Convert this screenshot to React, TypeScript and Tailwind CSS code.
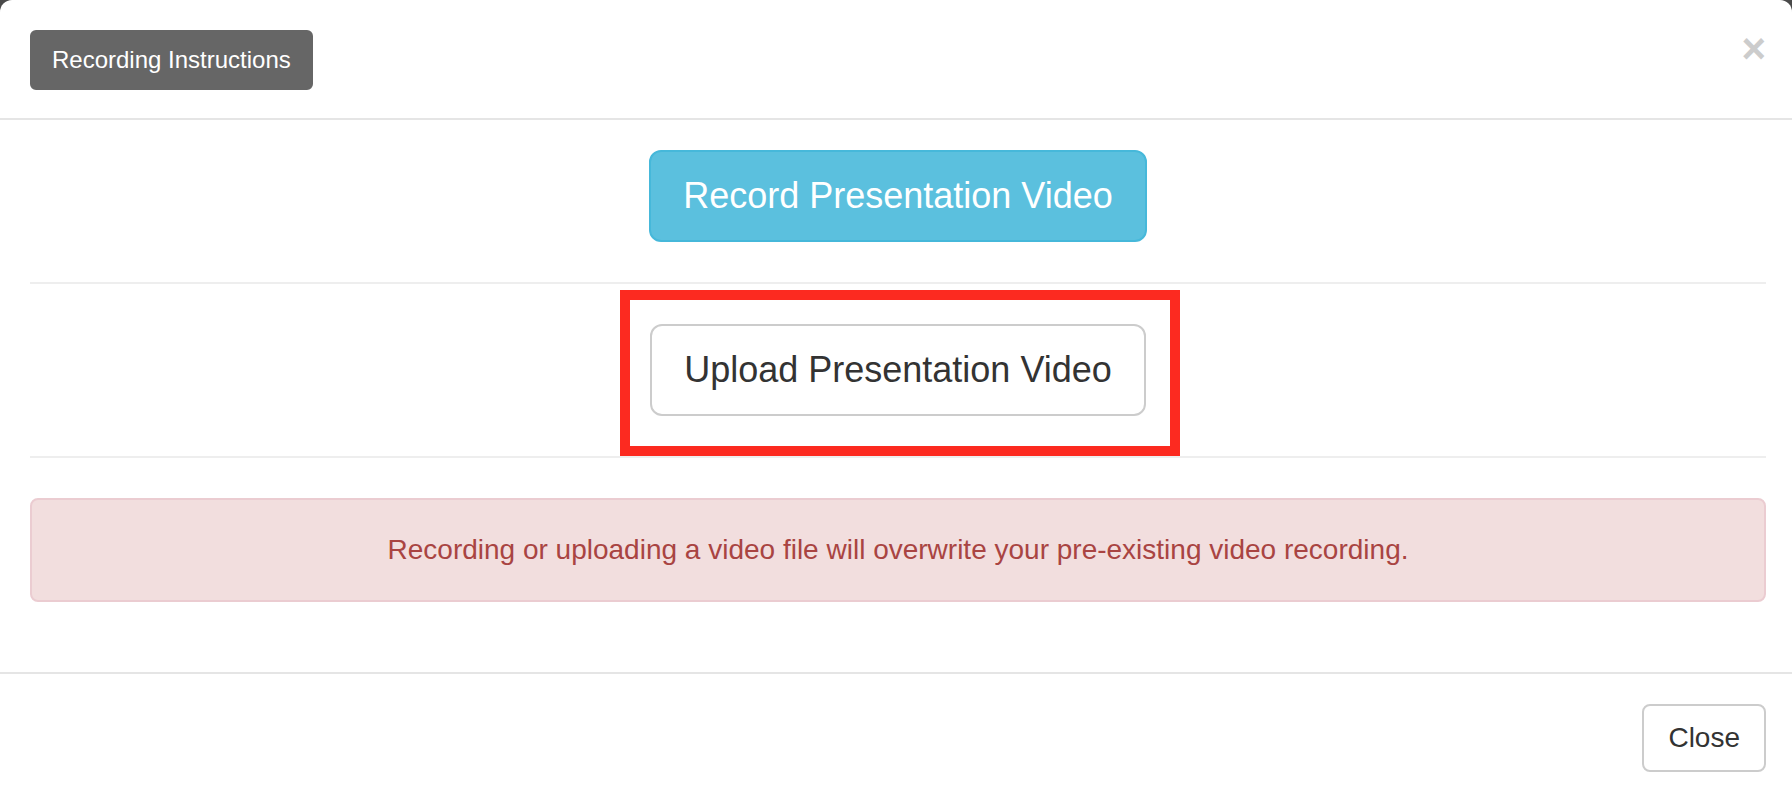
import React from "react";

export default function App() {
  return (
    <div
      className="w-[1792px] h-[790px] overflow-hidden bg-[#4a4a4a]"
      style={{ fontFamily: '"Liberation Sans", Arial, Helvetica, sans-serif' }}
    >
      <div className="bg-white rounded-t-[12px] h-full w-[1792px]">
        {/* Header */}
        <div className="flex items-start justify-between pl-[30px] pr-[26px] pt-[30px] pb-[28px] border-b-2 border-[#e5e5e5]">
          <button className="bg-[#666666] text-white text-[24px] leading-[36px] px-[20px] py-[10px] rounded-[6px] border-2 border-[#666666]">
            Recording Instructions
          </button>
          <button className="text-[42px] leading-[42px] font-bold text-[#cccccc] mt-[-2px]">
            ×
          </button>
        </div>

        {/* Body */}
        <div className="pl-[30px] pr-[26px] pt-[30px] pb-[70px]">
          <div className="flex justify-center">
            <button className="bg-[#5bc0de] border-2 border-[#46b8da] text-white text-[36px] leading-[48px] px-[32px] py-[20px] rounded-[12px]">
              Record Presentation Video
            </button>
          </div>
          <div className="my-[40px] border-t-2 border-[#eeeeee]" />
          <div className="flex justify-center">
            <div className="relative">
              <button className="bg-white border-2 border-[#cccccc] text-[#333333] text-[36px] leading-[48px] px-[32px] py-[20px] rounded-[12px]">
                Upload Presentation Video
              </button>
              <div className="absolute left-[-30px] top-[-34px] w-[560px] h-[166px] border-[10px] border-[#fc2a20] pointer-events-none" />
            </div>
          </div>
          <div className="my-[40px] border-t-2 border-[#eeeeee]" />
          <div className="bg-[#f2dede] border-2 border-[#ebccd1] rounded-[8px] p-[30px] text-center text-[#a94442] text-[28px] leading-[40px]">
            Recording or uploading a video file will overwrite your pre-existing video recording.
          </div>
        </div>

        {/* Footer */}
        <div className="flex justify-end pl-[30px] pr-[26px] pt-[30px] border-t-2 border-[#e5e5e5]">
          <button className="bg-white border-2 border-[#cccccc] text-[#333333] text-[28px] leading-[40px] px-[24px] py-[12px] rounded-[8px]">
            Close
          </button>
        </div>
      </div>
    </div>
  );
}
